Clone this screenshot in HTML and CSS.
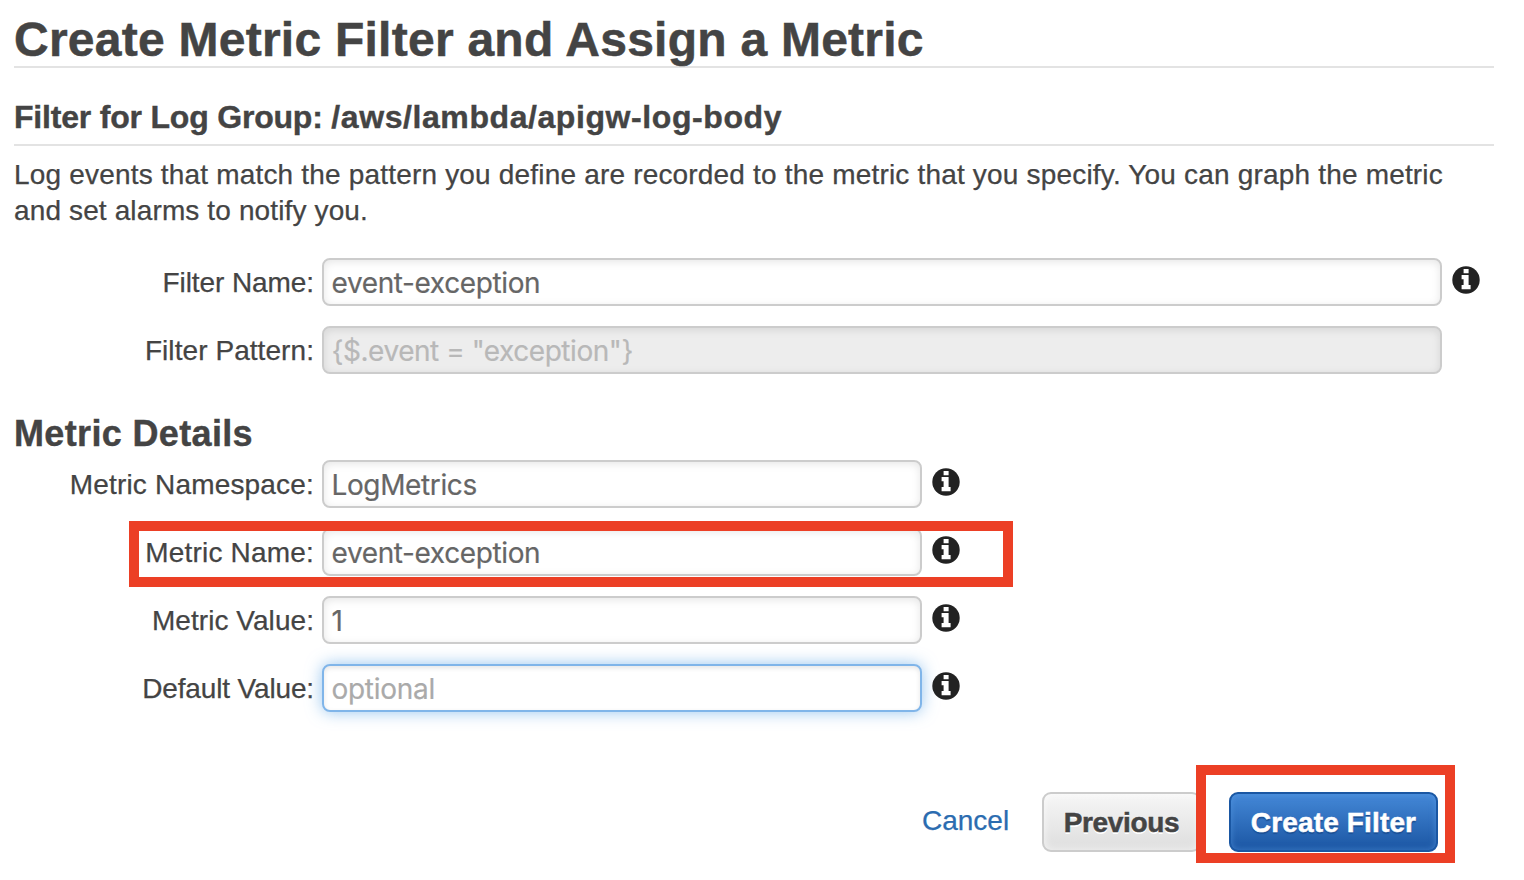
FILE: index.html
```
<!DOCTYPE html>
<html lang="en">
<head>
<meta charset="utf-8">
<title>Create Metric Filter</title>
<link rel="stylesheet" href="styles.css">
</head>
<body>
<svg class="defs" aria-hidden="true">
  <symbol id="info" viewBox="0 0 28 28">
    <circle cx="14" cy="14" r="13.7" fill="#222"/>
    <path fill="#fff" d="M11.6 3h5v4.2h-5zM9.6 9h7v10h2v4.2h-9V19h2v-5.7h-2z"/>
  </symbol>
</svg>
<main class="page">
  <h1 class="title">Create Metric Filter and Assign a Metric</h1>
  <h2 class="subtitle">Filter for Log Group: <span class="group">/aws/lambda/apigw-log-body</span></h2>
  <p class="intro"><span class="line-one">Log events that match the pattern you define are recorded to the metric that you specify. You can graph the metric</span><br><span class="line-two">and set alarms to notify you.</span></p>
  <form class="form">
    <div class="row"><label class="label l-fname">Filter Name:</label><div class="field wide">event-exception</div><svg class="info"><use href="#info"/></svg></div>
    <div class="row"><label class="label l-pattern">Filter Pattern:</label><div class="field wide disabled">{$.event = "exception"}</div></div>
    <h3 class="section">Metric Details</h3>
    <div class="row"><label class="label l-ns">Metric Namespace:</label><div class="field">LogMetrics</div><svg class="info"><use href="#info"/></svg></div>
    <div class="row"><label class="label l-mname">Metric Name:</label><div class="field">event-exception</div><svg class="info"><use href="#info"/></svg><div class="mark mark-name"></div></div>
    <div class="row"><label class="label l-value">Metric Value:</label><div class="field">1</div><svg class="info"><use href="#info"/></svg></div>
    <div class="row"><label class="label l-default">Default Value:</label><div class="field focused">optional</div><svg class="info"><use href="#info"/></svg></div>
  </form>
  <div class="actions">
    <a class="cancel">Cancel</a>
    <div class="button previous">Previous</div>
    <div class="button create">Create Filter<div class="mark mark-create"></div></div>
  </div>
</main>
</body>
</html>
```
FILE: styles.css
```
* { box-sizing: border-box; }
body {
  min-height: 880px;
  margin: 0;
  background: #fff;
  color: #444;
  font: 28px/36px "Liberation Sans", Arial, sans-serif;
}
.defs { position: absolute; width: 0; height: 0; }
.page { width: 1480px; margin-left: 14px; }
.title, .subtitle, .section { margin: 0; font-weight: bold; white-space: nowrap; }
.title {
  height: 68px;
  padding-top: 12px;
  border-bottom: 2px solid #e3e3e3;
  font-size: 48px;
  line-height: 56px;
  letter-spacing: .25px;
  -webkit-text-stroke: .5px;
}
.subtitle {
  height: 78px;
  padding-top: 29px;
  border-bottom: 2px solid #e3e3e3;
  font-size: 32px;
  line-height: 40px;
  letter-spacing: -.2px;
  -webkit-text-stroke: .4px;
}
.group { letter-spacing: .58px; }
.intro { height: 72px; margin: 11px 0 29px; white-space: nowrap; -webkit-text-stroke: .25px; }
.line-one { letter-spacing: .183px; }
.line-two { letter-spacing: .13px; }
.form { display: flex; flex-direction: column; gap: 20px; }
.row { position: relative; display: flex; height: 48px; }
.label { width: 300px; margin-right: 8px; text-align: right; line-height: 50px; white-space: nowrap; -webkit-text-stroke: .25px; }
.l-fname { letter-spacing: -.08px; }
.l-pattern { letter-spacing: .07px; }
.l-ns { letter-spacing: .18px; }
.l-mname { letter-spacing: .18px; }
.l-value { letter-spacing: .06px; }
.l-default { letter-spacing: -.14px; }
.field {
  width: 600px;
  height: 48px;
  padding-left: 7.5px;
  border: 2px solid #ccc;
  border-radius: 8px;
  background: #fff;
  box-shadow: inset 0 2px 8px rgba(0, 0, 0, .1);
  color: #666;
  font: 28px/47px Inter, sans-serif;
  letter-spacing: -.38px;
  white-space: nowrap;
  -webkit-text-stroke: .2px;
}
.wide { width: 1120px; }
.disabled { background: #ededed; color: #b8b8b8; letter-spacing: -.46px; }
.focused { border-color: #80b5e9; color: #aaa; letter-spacing: -.28px; box-shadow: inset 0 2px 5px rgba(0, 0, 0, .1), 0 0 16px rgba(82, 158, 228, .6); }
.info { width: 28px; height: 28px; margin: 8px 0 0 9.5px; }
.section { height: 66px; padding-top: 20px; font-size: 36px; line-height: 40px; margin-bottom: -20px; letter-spacing: .35px; -webkit-text-stroke: .4px; }
.mark { position: absolute; border: 10px solid #ec3f25; }
.mark-name { left: 115px; top: -7px; width: 884px; height: 66px; }
.actions { display: flex; height: 60px; margin-top: 80px; padding-left: 908px; }
.cancel { width: 120px; color: #2b6cb0; line-height: 57px; white-space: nowrap; -webkit-text-stroke: .25px; }
.button {
  position: relative;
  height: 60px;
  border: 2px solid #ccc;
  border-radius: 9px;
  font-weight: bold;
  line-height: 57px;
  text-align: center;
  white-space: nowrap;
  -webkit-text-stroke: .5px;
}
.previous {
  width: 159px;
  margin-right: 28px;
  background: linear-gradient(#f6f6f6, #dedede);
  box-shadow: inset 0 0 8px rgba(255, 255, 255, .7);
  text-shadow: 0 2px 0 #fff;
  letter-spacing: -.35px;
}
.create {
  width: 209px;
  border-color: #1a57a3;
  background: linear-gradient(#4488d7, #1b56a3);
  box-shadow: inset 0 0 6px rgba(90, 155, 230, .6);
  color: #fff;
  text-shadow: 0 2px 1px #1a4f94;
  letter-spacing: .15px;
}
.mark-create { left: -35px; top: -29px; width: 259px; height: 98px; }
```
